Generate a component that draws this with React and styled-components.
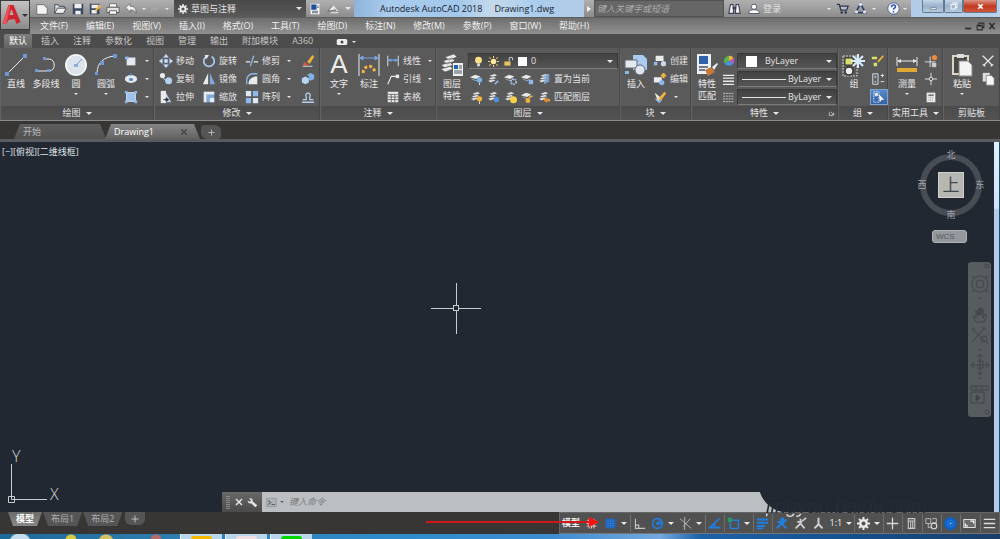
import React from "react";
import styled, { createGlobalStyle, css } from "styled-components";

const GlobalStyle = createGlobalStyle`
  *, *::before, *::after { box-sizing: border-box; }
  html, body { margin: 0; padding: 0; }
  body {
    background: #222831;
    color: #e4e4e4;
    font: 9px/12px "Open Sans", "Noto Sans CJK SC", sans-serif;
    overflow-x: hidden;
  }
  button, input, select {
    font: inherit;
    color: inherit;
    background: none;
    border: 0;
    border-radius: 0;
    padding: 0;
    margin: 0;
    outline: none;
  }
  button { white-space: nowrap; }
  a { color: inherit; text-decoration: none; }
`;

/* ---------- drawings ---------- */

const W = "#e8eaec";
const B = "#8db8ea";
const Y = "#f0b53a";
const C = "#1f7fe0";

const Sheets = ({ children }) => (
  <>
    <path d="M4 4l6-2 3 2-6 2zM3 7l6-2 3 2-6 2zM2 10l6-2 3 2-6 2z" fill={W} stroke="#555" strokeWidth=".5" />
    {children}
  </>
);

const Sheet = ({ children }) => (
  <>
    <path d="M1 6l6-3 6 2-5 3z" fill={W} />
    <path d="M3 8l5 2 4-2" stroke="#9aa" fill="none" />
    {children}
  </>
);

const art = {
  /* title bar */
  new: <path d="M2 3h8l4 4v7H2z" fill="#f4f4f4" stroke="#666" />,
  open: <><path d="M2 13V3h4l1 2h6v2" fill="#d8dde2" stroke="#3d4450" /><path d="M2 13l3-6h10l-3 6z" fill="#eee" stroke="#3d4450" /></>,
  save: <><path d="M2 2h12v12H2z" fill="#3c4a60" /><path d="M4 2h8v5H4zM5 10h6v4H5z" fill="#eee" /></>,
  saveas: <><path d="M2 2h11v12H2z" fill="#3c4a60" /><path d="M4 3h8v4H4zM4 9h6v4H4z" fill="#eee" /><path d="M8 9l5-6 2 2-6 6z" fill={Y} /></>,
  print: <><path d="M4 2h8v4H4z" fill="#fff" stroke="#666" /><path d="M1 6h14v6H1z" fill="#e2e2e2" stroke="#555" /><path d="M4 10h8v4H4z" fill="#fff" stroke="#555" /></>,
  undo: <path d="M2 6l5-4v3c5 0 7 2 7 8-2-4-3-4-7-4v3z" fill="#f2f2f2" stroke="#555" strokeWidth=".7" />,
  redo: <path d="M14 6L9 2v3c-5 0-7 2-7 8 2-4 3-4 7-4v3z" fill="#a5a5a5" />,
  gear: <><circle cx="8" cy="8" r="4" fill="none" stroke={W} strokeWidth="3" /><path d="M8 0v3M8 13v3M0 8h3M13 8h3M2.500 2.500l2 2M11.500 11.500l2 2M2.500 13.500l2-2M11.500 4.500l2-2" stroke={W} strokeWidth="2.400" /></>,
  docset: <><path d="M2 1h12v14H2z" fill="#f4f4f4" /><path d="M3 2h7v7H3z" fill="#1b4f9c" /><path d="M4 11h8M4 13h8M11 4h2M11 6h2" stroke="#345" /></>,
  sheetpen: <><path d="M1 11l7-8 4 6z" fill="#eee" stroke="#555" /><path d="M8 3l6 8M5 13h10" stroke="#eee" strokeWidth="1.500" /></>,
  binoculars: <><path d="M3 3h3l1 11H1zM10 3h3l2 11H9z" fill="#f2f2f2" stroke="#3a3d55" strokeWidth="1.300" /><path d="M6 6h4v3H6z" fill="#3a3d55" /></>,
  user: <><circle cx="8" cy="5" r="3.500" fill="#fff" stroke="#3a3d55" /><path d="M1 14c0-4 3-5 7-5s7 1 7 5z" fill="#fff" stroke="#3a3d55" /></>,
  cart: <><path d="M1 3h3l2 7h7l2-5H5" fill="#bbc0c8" stroke="#2f3550" strokeWidth="1.600" /><circle cx="7" cy="13" r="1.500" fill="#2f3550" /><circle cx="12" cy="13" r="1.500" fill="#2f3550" /></>,
  a360: <><path d="M8 2l6 11H2z" fill="none" stroke="#2f3f6a" strokeWidth="2" /><circle cx="8" cy="3" r="2" fill="#dfe6f2" /><circle cx="3" cy="12" r="2" fill="#dfe6f2" /><circle cx="13" cy="12" r="2" fill="#dfe6f2" /></>,
  help: <><circle cx="8" cy="8" r="7" fill="#f6f8fc" stroke="#33508f" /><path d="M5.500 6.500c0-4 5-3.500 5-1 0 2-2.500 2-2.500 4M8 11v2" fill="none" stroke="#2a4fae" strokeWidth="1.800" /></>,
  video: <><rect x="1" y="4" width="14" height="8" rx="2" fill="#eee" /><circle cx="8" cy="8" r="2" fill="#444" /></>,
  min: <path d="M3 10h10v3H3z" fill="#fff" stroke="#555" />,
  restore: <path d="M5 2h9v9h-3M2 5h9v9H2z" fill="none" stroke="#f8f8f8" strokeWidth="2" />,
  close: <path d="M4 4l8 8M12 4l-8 8" stroke="#fff" strokeWidth="3" />,
  dmin: <path d="M2 10h11v3H2z" fill="#2b2b2b" />,
  drestore: <path d="M5 5V2h9v8h-3M2 6h9v8H2zM2 7h9" fill="none" stroke="#2b2b2b" strokeWidth="1.800" />,
  dclose: <path d="M3 2l10 12M13 2L3 14" stroke="#2b2b2b" strokeWidth="3" />,

  /* large ribbon buttons, 24 x 24 */
  line: <><path d="M3 21L21 3" stroke={W} /><path d="M1 19h4v4H1zM19 1h4v4h-4z" fill="#6d97d6" /></>,
  pline: <><path d="M3 18h12c7 0 7-12 0-12H11" stroke={W} fill="none" /><path d="M1 16h3v3H1zM13 16h3v3h-3zM9 4h3v3H9z" fill="#6d97d6" /></>,
  circle: <><circle cx="12" cy="12" r="11" fill="#dfe5ec" /><circle cx="12" cy="12" r="10" fill="#dde3ea" stroke="#fff" /><path d="M12 12l6-6" stroke="#6d97d6" /><path d="M10 11h4v3h-4z" fill="#86aee2" /></>,
  arc: <><path d="M3 21C3 9 10 4 21 3" stroke={W} fill="none" /><path d="M1 19h3v3H1zM6 8h4v4H6zM19 1h4v4h-4z" fill="#6d97d6" /></>,
  dim: <><path d="M2 1v22M22 1v22" stroke={W} /><path d="M3 5h18M3 5l3-2v4zM21 5l-3-2v4z" stroke="#76a4e6" fill="#76a4e6" /><path d="M6 20c1-9 11-9 12 0" stroke={Y} strokeWidth="3" strokeDasharray="3 2" fill="none" /></>,
  layerprops: <><path d="M5 4l9-3 3 3-8 3zM3 8l9-3 3 3-8 3zM1 12l9-3 3 3-8 3zM1 16l9-3 3 3-8 3z" fill={W} stroke="#555" strokeWidth=".6" /><path d="M13 10h10v13H13z" fill="#f2f2f2" /><path d="M14 12h4v4h-4z" fill="#2561b5" /><path d="M19 13h3M19 15h3M14 18h8M14 20h8" stroke="#456" /></>,
  insert: <><path d="M9 2h10l4 4v11H9z" fill="#a9cbf0" /><path d="M1 7h12v8H1z" fill="#e5e9ee" stroke="#667" /><circle cx="16" cy="17" r="5" fill="#dfe5ec" stroke="#667" /><path d="M1 18h4v3H1z" fill={B} /></>,
  match: <><path d="M2 1h14v20H2z" fill="#eceff2" /><path d="M4 3h9v8H4z" fill="#2f62aa" /><path d="M4 14h9M4 17h6" stroke="#456" strokeWidth="1.500" /><path d="M10 17l6-3 4 5-7 4z" fill="#c7793a" /><path d="M17 14l5-4 1 1-4 6z" fill={W} /></>,
  group: <><path d="M1 3h14v20H1z" fill="none" stroke="#ccc" strokeDasharray="2 1" /><path d="M3 5h8v7H3z" fill="#d9e06a" stroke="#333" /><circle cx="7" cy="18" r="4" fill="#eee" stroke="#333" strokeWidth="1.500" /><path d="M16 1v14M9 8h14M11 3l10 10M21 3L11 13" stroke="#d8ecff" strokeWidth="2" /></>,
  measure: <><path d="M2 4v9M22 4v9M3 8h18" stroke={W} /><path d="M2 8l4-2v4zM22 8l-4-2v4z" fill={W} /><path d="M2 15h20v4H2z" fill="#e0a936" /></>,
  paste: <><path d="M3 3h15v18H3z" fill="#4c4a46" stroke="#ddd6c4" strokeWidth="2" /><path d="M7 1h7v4H7z" fill="#ddd" /><path d="M9 8h9l4 4v11H9z" fill="#f4f4f4" stroke="#888" /></>,

  /* small ribbon buttons, 16 x 16 */
  rect: <><path d="M3 4h10v9H3z" fill="#e3e9f0" /><path d="M1 3h4v3H1z" fill={B} /></>,
  ellipse: <><ellipse cx="8" cy="8" rx="7" ry="4.500" fill="#e3e9f0" /><path d="M6 7h4v3H6zM7 1h2v3H7z" fill="#4d7fbd" /></>,
  hatch: <><path d="M3 3h10v10H3z" fill="#9cc1ec" stroke="#dce8f6" /><path d="M1 1h3v3H1zM12 1h3v3h-3zM1 12h3v3H1zM12 12h3v3h-3z" fill={B} /></>,
  move: <path d="M8 0l3 4H5zM8 16l3-4H5zM0 8l4-3v6zM16 8l-4-3v6zM6 6h4v4H6z" fill="#d4e2f3" stroke="#86abd9" strokeWidth=".6" />,
  rotate: <><path d="M11 3a6 6 0 1 1-6 0" fill="none" stroke="#a9c8ee" strokeWidth="2" /><path d="M3 1l5 0-3 5z" fill={W} /></>,
  trim: <><path d="M1 9h5M10 9h5" stroke={W} strokeWidth="1.500" /><path d="M10 2L6 14" stroke={B} strokeWidth="1.500" /></>,
  erase: <><path d="M7 9l6-8 2 2-5 8z" fill={Y} /><path d="M4 9l4 3-3 2-3-2z" fill="#d65a3a" /><path d="M2 14h11" stroke={W} /></>,
  copy: <><circle cx="4" cy="4" r="3" fill={W} /><circle cx="11" cy="10" r="4" fill="#b3d0f2" /><path d="M5 7l3 3" stroke={W} /></>,
  mirror: <><path d="M7 1v13H1z" fill={W} /><path d="M9 1v13h6z" fill="#7da9df" /></>,
  fillet: <><path d="M2 14V8c1-4 4-6 8-6h4" stroke={B} strokeWidth="1.500" fill="none" /><path d="M4 14c0-6 4-9 10-9v9z" fill={W} /></>,
  explode: <><path d="M1 7l4-2 4 2v5l-4 2-4-2z" fill="#b8d3f2" /><path d="M7 3l4-2 4 2v5l-4 2-2-1V5z" fill="#7fb0e8" /></>,
  stretch: <><path d="M2 1h6v14H2z" fill={W} /><path d="M8 3l6 11H8z" fill="#b3d0f2" /><path d="M5 11h5M8 9l3 2-3 2z" stroke="#333" fill="#333" /></>,
  scale: <><path d="M2 2h12v12H2z" fill="#7fa8dc" /><path d="M2 2h12v3H5v9H2z" fill={W} /><path d="M9 9h5v5H9z" fill="#e3edf8" /></>,
  array: <><path d="M1 1h6v6H1zM9 9h6v6H9z" fill="#dfe9f5" /><path d="M9 1h6v6H9zM1 9h6v6H1z" fill="#8db8ea" /></>,
  offset: <path d="M1 14h14M2 11h4V8c-3-6 7-6 4 0v3h4" stroke="#b8cfe9" fill="none" strokeWidth="1.500" />,
  linear: <><path d="M2 2v12M14 2v12" stroke={W} /><path d="M2 7h12" stroke="#76a4e6" strokeWidth="1.500" /><path d="M2 7l4-2v4zM14 7l-4-2v4z" fill="#76a4e6" /></>,
  leader: <><path d="M2 14L6 5h5" stroke={W} fill="none" strokeWidth="1.300" /><path d="M11 3h4v4h-4z" fill={W} /></>,
  table: <><path d="M2 2h12v12H2z" fill={W} /><path d="M2 5h12M2 8h12M2 11h12M6 5v9M10 5v9" stroke="#666" /></>,
  bulb: <><circle cx="8" cy="6" r="5" fill="#fbe08a" /><path d="M6 11h4v4H6z" fill="#ddd" /></>,
  sun: <><circle cx="8" cy="8" r="4" fill="#fbe9a0" /><path d="M8 0v3M8 13v3M0 8h3M13 8h3M2 2l2 2M12 12l2 2M2 14l2-2M12 4l2-2" stroke="#f3cf6a" strokeWidth="1.500" /></>,
  lock: <><path d="M2 8h9v6H2z" fill="#e8c25a" /><path d="M9 8V4c0-3 5-3 5 0v2" stroke="#ccc" fill="none" strokeWidth="1.500" /></>,
  l1: <Sheet><circle cx="12" cy="9" r="3" fill="#6fb6f5" /><path d="M12 12v3" stroke={W} /></Sheet>,
  l2: <Sheets><path d="M10 14l4-4" stroke={B} strokeWidth="2" /></Sheets>,
  l3: <Sheet><circle cx="12" cy="11" r="3" fill="none" stroke="#a9cbf0" strokeWidth="2" strokeDasharray="2 1" /></Sheet>,
  l4: <Sheet><path d="M10 9h5v5h-5z" fill={B} /></Sheet>,
  l5: <Sheets><path d="M8 3l6-1v9l-6 3z" fill="#8db8ea" opacity=".7" /></Sheets>,
  l6: <Sheets><circle cx="12" cy="10" r="3" fill={Y} /><path d="M12 13v3" stroke={W} /></Sheets>,
  l7: <Sheets><circle cx="12" cy="11" r="3" fill="#4f8fdb" /></Sheets>,
  l8: <Sheets><circle cx="12" cy="11" r="4" fill="#f5d24a" /></Sheets>,
  l9: <Sheet><path d="M7 10h4v4H7zM11 9V7h4" stroke={Y} fill={Y} /></Sheet>,
  l10: <Sheets><path d="M7 11l4-3v2h4v3h-4v2z" fill="#e0903a" /></Sheets>,
  create: <><path d="M3 2h9v6H3z" fill={W} /><circle cx="12" cy="11" r="3" fill="#c9d8ea" /><path d="M1 9h4v4H1z" fill={B} /></>,
  editblock: <><path d="M1 6h9v6H1z" fill={W} /><circle cx="10" cy="12" r="3" fill={B} /><path d="M12 1v6M9 4h6" stroke={Y} strokeWidth="2.500" /></>,
  attr: <><path d="M2 3l6 5-2 6z" fill={W} /><path d="M6 10l7-8 2 2-7 9z" fill={Y} /><path d="M3 10l4 4 3-3" stroke={B} fill="none" strokeWidth="1.500" /></>,
  wheel: <><path d="M8 8V1a7 7 0 0 1 6 10z" fill="#e0583c" /><path d="M8 8l6 3a7 7 0 0 1-12 0z" fill="#4a8fe0" /><path d="M8 8l-6 3A7 7 0 0 1 8 1z" fill="#57b34a" /><path d="M8 8l6 3a7 7 0 0 0 0-7z" fill="#b057c4" /><path d="M8 1a7 7 0 0 1 6 3l-6 4z" fill={Y} /></>,
  weights: <path d="M0 2h16M0 6h16M0 10.500h16M0 15h16" stroke={W} strokeWidth="2" />,
  types: <path d="M0 2h16M0 6h16M0 10h16M0 14h16" stroke={W} strokeDasharray="3 1" />,
  ungroup: <><path d="M1 3h6v3H1zM3 10h4v4H3z" fill="#d9e06a" /><path d="M8 9l6-7" stroke={Y} strokeWidth="2" /></>,
  groupedit: <><path d="M2 2h6v12H2z" fill="none" stroke={W} /><path d="M4 4h2v3H4zM4 10h2v2H4z" fill={B} /><path d="M11 4h4M13 2v4M11 11h4" stroke={W} /></>,
  groupsel: <><path d="M2 2h6v12H2z" fill="none" stroke="#cfe3ff" strokeDasharray="2 1" /><circle cx="5" cy="5" r="2" fill={W} /><path d="M8 5l6 6-3 0-2 3z" fill="#fff" /></>,
  point: <><path d="M8 1v14M1 8h14" stroke={W} /><circle cx="8" cy="8" r="2" fill="#555" stroke={W} /></>,
  pointid: <><path d="M7 3v12M1 9h12" stroke={W} /><circle cx="12" cy="4" r="3" fill="#f0873a" /><path d="M9 10h5v5H9z" fill="#ccc" /></>,
  calc: <><path d="M3 3h10v11H3z" fill={W} /><path d="M5 5h6v2H5z" fill="#777" /><path d="M5 9h6M5 11.500h6" stroke="#888" strokeDasharray="1 1" /></>,
  cut: <path d="M2 2l11 11M14 2L3 13M2 12l3 2M14 12l-3 2" stroke={W} strokeWidth="1.500" />,
  copyclip: <><path d="M2 1h8v10H2z" fill="#ddd" /><path d="M6 4h6l3 3v8H6z" fill="#f6f6f6" stroke="#777" strokeWidth=".8" /></>,
  launch: <path d="M3 5v8h8M6 4l7 7M13 6v5H8" stroke={W} fill="none" strokeWidth="1.500" />,

  /* command line and status bar */
  wrench: <path d="M3 2l3 3-2 2-3-2c0 4 3 5 5 4l6 6 3-3-7-6c1-3-1-5-5-4z" fill="#e4e4e4" />,
  prompt: <><path d="M1 2h14v12H1z" fill="#aeb2b4" stroke="#8b8f92" /><path d="M3 5l4 3-4 3M8 11h5" stroke="#5a5e62" fill="none" strokeWidth="1.500" /></>,
  snap: <path d="M5 2v12M8 2v12M11 2v12M2 5h12M2 8h12M2 11h12" stroke="#e8c8c4" strokeWidth="1.300" />,
  grid: <><path d="M2 2h12v12H2z" fill="#1b62b8" /><path d="M5 2v12M8 2v12M11 2v12M2 5h12M2 8h12M2 11h12" stroke="#3a86dc" strokeWidth=".6" /></>,
  ortho: <path d="M3 2v12h12M3 10h4v4" stroke="#c4c4c4" fill="none" strokeWidth="1.400" />,
  polar: <><circle cx="8" cy="8" r="6" fill="none" stroke={C} strokeWidth="2" /><path d="M8 8h7M8 8l5-5" stroke={C} strokeWidth="1.800" /><circle cx="8" cy="8" r="2" fill={C} /></>,
  iso: <path d="M1 2l14 12M7 0v16M14 2L5 12" stroke="#b4b4b4" strokeWidth="1.200" fill="none" />,
  track: <path d="M14 2L2 13h13M8 8v4" stroke={C} fill="none" strokeWidth="2" />,
  osnap: <><path d="M4 4h10v10H4z" fill="none" stroke={C} strokeWidth="1.800" /><path d="M1 1h5v5H1z" fill="#20a050" /></>,
  lwt: <path d="M1 3h14M1 7h14M1 11h10M1 14h8" stroke={C} strokeWidth="2.400" />,
  annoBlue: <><circle cx="9" cy="3" r="2.500" fill={C} /><path d="M8 4l1 5 5 5M8 8l-6 6M3 6l7 1 4-4" stroke={C} strokeWidth="2.500" fill="none" /></>,
  annoGrey: <><path d="M8 2v6l5 6M8 8l-6 6M4 6h6" stroke="#cfcfcf" strokeWidth="2.200" fill="none" /><path d="M10 5l5-4" stroke="#cfcfcf" strokeWidth="2" /></>,
  anno: <path d="M8 1v8l5 5M8 9l-5 5" stroke="#cfcfcf" strokeWidth="2.400" fill="none" />,
  plus: <path d="M8 1v14M1 8h14" stroke="#d8d8d8" strokeWidth="1.600" />,
  units: <path d="M4 2h8v12H4zM4 5h8M7 5v9M9.500 5v9" fill="none" stroke="#c8c8c8" strokeWidth="1.300" />,
  quick: <><path d="M1 2h6v6H1zM9 2h5v5H9" fill="none" stroke="#c8c8c8" /><circle cx="11" cy="11" r="3.500" fill="none" stroke="#d8d8d8" strokeWidth="1.400" /><path d="M4 8v5h3" stroke="#c8c8c8" fill="none" /></>,
  hardware: <><circle cx="8" cy="8" r="8" fill="#0d62c4" /><circle cx="8" cy="8" r="4" fill="none" stroke="#2f82de" /><path d="M7 6l3 2-3 2z" fill="#66aaf4" /></>,
  full: <><path d="M1 3h14v10H1z" fill="#6c6c6c" stroke="#ddd" strokeWidth="1.300" /><path d="M9 5h4v3M3 8v3h3" fill="none" stroke="#fff" strokeWidth="1.500" /></>,
  burger: <path d="M1 3h14M1 8h14M1 13h14" stroke="#dcdcdc" strokeWidth="1.600" />,
};

const Svg = styled.svg`
  display: block;
  flex: none;
  width: ${(p) => p.$size}px;
  height: ${(p) => p.$size}px;
`;

function Icon({ name, size = 12, box = 16 }) {
  return (
    <Svg $size={size} viewBox={`0 0 ${box} ${box}`} aria-hidden="true">
      {art[name]}
    </Svg>
  );
}

const Caret = styled.i`
  flex: none;
  width: 0;
  height: 0;
  border: ${(p) => (p.$small ? 2 : 3)}px solid transparent;
  border-top-color: ${(p) => p.$color || "#e8e8e8"};
  border-bottom: 0;
  pointer-events: none;
`;

/* ---------- page ---------- */

const Page = styled.div`
  min-height: 100vh;
  display: flex;
  flex-direction: column;
`;

const Header = styled.header`
  display: grid;
  grid-template-columns: 30px 1fr;
  background: #4c4c4c;
`;

const AppButton = styled.button`
  height: 30px;
  display: flex;
  align-items: center;
  justify-content: center;
  gap: 1px;
  border: 1px solid #3c3c3c;
  background: linear-gradient(#c2c2c2, #8a8a8a);
`;

const HeaderRows = styled.div`
  min-width: 0;
`;

const TitleBar = styled.div`
  height: 18px;
  display: flex;
  background: linear-gradient(#b0b0b0, #8c8c8c);
  border-bottom: 1px solid #5e5e5e;
`;

const ToolStrip = styled.div`
  flex: none;
  width: ${(p) => p.$width}px;
  padding: 0 ${(p) => p.$pad || 4}px;
  display: flex;
  align-items: center;
  justify-content: ${(p) => p.$justify || "space-between"};
  gap: ${(p) => p.$gap || 0}px;
`;

const IconButton = styled.button`
  display: flex;
  align-items: center;
  justify-content: center;
  gap: 3px;
`;

const Workspace = styled.label`
  flex: none;
  width: 132px;
  display: flex;
  align-items: center;
  gap: 3px;
  padding: 0 4px;
  background: linear-gradient(#484848, #5a5a5a);
`;

const Select = styled.select`
  appearance: none;
  flex: 1;
  min-width: 0;
  height: 14px;
  line-height: 14px;
  option { color: #222; }
`;

const WindowTitle = styled.h1`
  flex: 1;
  min-width: 0;
  margin: 0;
  display: flex;
  gap: 12px;
  align-items: center;
  padding-left: 26px;
  font-size: 9px;
  font-weight: 400;
  color: #16202c;
  white-space: nowrap;
  background: linear-gradient(90deg, #8fb4dc, #a9cbec 15%, #a2c8ec 45%, #c4d9ea 60%, #a9cdee 80%, #b4cce4);
`;

const Search = styled.input`
  flex: none;
  width: 130px;
  padding: 0 2px;
  background: #666;
  border: 1px solid #545454;
  font-style: italic;
  &::placeholder { color: #acacac; opacity: 1; }
`;

const WindowButtons = styled.div`
  flex: none;
  width: 89px;
  display: flex;
  justify-content: flex-end;
  align-items: flex-start;
  padding-right: 3px;
  background: linear-gradient(90deg, #b2cbe6, #b9d3ec);
`;

const WindowButton = styled.button`
  width: ${(p) => p.$width}px;
  height: 13px;
  display: flex;
  align-items: center;
  justify-content: center;
  border: 1px solid #66788c;
  border-top: 0;
  border-radius: 0 0 2px 2px;
  background: ${(p) => (p.$danger ? "linear-gradient(#dc9686, #c03a20 50%, #d0573a)" : "linear-gradient(#c4d6e8, #9ab2cc 50%, #b4cae0)")};
`;

const MenuBar = styled.nav`
  height: 16px;
  display: flex;
  align-items: center;
  gap: 18px;
  padding: 0 4px 0 10px;
  background: linear-gradient(#6e6e6e, #909090);
  white-space: nowrap;
  a { color: #f0f0f0; }
`;

const DocButtons = styled.div`
  margin-left: auto;
  display: flex;
  gap: 3px;
`;

const RibbonTabs = styled.nav`
  display: flex;
  align-items: flex-end;
  gap: 4px;
  height: 14px;
  padding-left: 4px;
  background: #4c4c4c;
`;

const RibbonTab = styled.a`
  height: 14px;
  line-height: 14px;
  padding: 0 5px;
  border-radius: 2px 2px 0 0;
  color: ${(p) => (p.$active ? "#fff" : "#c6c6c6")};
  background: ${(p) => (p.$active ? "linear-gradient(#7e7e7e, #646464)" : "none")};
`;

const Ribbon = styled.div`
  display: grid;
  grid-template-columns: 154fr 166fr 116fr 184fr 71fr 147fr 50fr 55fr 57fr;
  height: 73px;
  background: #5a5a5a;
  border-bottom: 1px solid #8a8a8a;
`;

const PanelBox = styled.section`
  min-width: 0;
  display: flex;
  flex-direction: column;
  border-right: 1px solid #474747;
  border-left: 1px solid #646464;
`;

const PanelBody = styled.div`
  flex: 1;
  display: flex;
  align-items: flex-start;
  gap: 2px;
  padding: 4px 1px 0 ${(p) => (p.$inset ? 4 : 1)}px;
`;

const PanelTitle = styled.h2`
  position: relative;
  margin: 0;
  height: 14px;
  display: flex;
  align-items: center;
  justify-content: center;
  gap: 5px;
  font-size: 9px;
  font-weight: 400;
  white-space: nowrap;
  background: linear-gradient(#4b4b4b, #525252);
`;

const Launcher = styled.button`
  position: absolute;
  right: 2px;
  top: 4px;
`;

const Large = styled.button`
  flex: none;
  width: 28px;
  display: flex;
  flex-direction: column;
  align-items: center;
  color: #ececec;
  span { width: 18px; white-space: normal; line-height: 12px; }
  ${(p) => p.$wide && css`span { width: 28px; }`}
  ${(p) => p.$single && css`span { width: 10px; }`}
  svg { margin: 1px 0; }
`;

const CaretRow = styled.div`
  height: 8px;
  display: flex;
  align-items: center;
`;

const LetterA = styled.b`
  height: 26px;
  font: 400 26px/24px "Liberation Sans", sans-serif;
`;

const SmallGrid = styled.div`
  flex: none;
  display: grid;
  grid-template-rows: repeat(3, 18px);
  grid-template-columns: ${(p) => p.$columns};
  align-items: center;
  margin-left: ${(p) => p.$indent || 0}px;
`;

const Small = styled.button`
  display: flex;
  align-items: center;
  gap: 3px;
  height: 16px;
  padding: 0 1px;
  i { margin-left: 4px; }
  ${(p) => p.$active && css`
    background: linear-gradient(#5a8acb, #34619f);
    border: 1px solid #7ea4d6;
  `}
`;

const Column = styled.div`
  flex: 1;
  min-width: 0;
  display: grid;
  grid-template-rows: repeat(3, 18px);
  align-items: center;
`;

const Combo = styled.label`
  height: 16px;
  display: flex;
  align-items: center;
  gap: 4px;
  padding: 0 4px;
  background: linear-gradient(#424242, #555);
  border: 1px solid #393939;
  border-bottom-color: #7c7c7c;
`;

const Swatch = styled.i`
  flex: none;
  width: ${(p) => p.$size}px;
  height: ${(p) => p.$size}px;
  margin: 0 ${(p) => p.$gap || 0}px;
  background: #fff;
`;

const Stroke = styled.i`
  flex: none;
  width: 44px;
  height: 1px;
  margin-right: -2px;
  background: #e4e4e4;
`;

const ToolRow = styled.div`
  display: flex;
  align-items: center;
  gap: 1px;
`;

const FileTabs = styled.nav`
  height: 21px;
  display: flex;
  align-items: flex-end;
  padding-left: 14px;
  background: #373635;
  border-bottom: 3px solid #5b5c61;
`;

const FileTab = styled.div`
  width: ${(p) => p.$width}px;
  height: 15px;
  display: flex;
  align-items: center;
  justify-content: space-between;
  padding: 0 13px 0 9px;
  margin-right: -1px;
  clip-path: polygon(6px 0, calc(100% - 6px) 0, 100% 100%, 0 100%);
  color: ${(p) => (p.$active ? "#fff" : "#b8b8b8")};
  background: ${(p) => (p.$active ? "linear-gradient(#868686, #626262)" : "linear-gradient(#5e5e5e, #515151)")};
`;

const AddTab = styled.button`
  width: 20px;
  height: ${(p) => (p.$bottom ? 13 : 14)}px;
  display: flex;
  align-items: center;
  justify-content: center;
  margin-left: 2px;
  border-radius: ${(p) => (p.$bottom ? "0 0 6px 6px" : "3px 6px 3px 6px")};
  background: #555;
`;

const Workarea = styled.main`
  flex: 1 0 340px;
  display: flex;
`;

const Canvas = styled.div`
  position: relative;
  flex: 1;
  background: #222831;
`;

const WindowEdge = styled.div`
  width: 6px;
  background: linear-gradient(#e2efff, #d0e2fa 66px, #b2cbea 68px, #b2cbea);
  border-right: 1px solid #16505c;
`;

const ViewLabel = styled.p`
  position: absolute;
  left: 2px;
  top: 4px;
  margin: 0;
  color: #dfe2e6;
`;

const Crosshair = styled.svg`
  position: absolute;
  left: 430px;
  top: 140px;
  width: 52px;
  height: 52px;
`;

const Ucs = styled.svg`
  position: absolute;
  left: 6px;
  bottom: 6px;
  width: 60px;
  height: 64px;
  font: 300 16px "Open Sans", sans-serif;
  fill: #d4d6d9;
`;

const ViewCube = styled.div`
  position: absolute;
  right: 9px;
  top: 7px;
  width: 68px;
  height: 72px;
  display: grid;
  grid-template-columns: 10px 1fr 10px;
  grid-template-rows: 12px 1fr 12px;
  place-items: center;
  color: #a0a4a9;
  &::before {
    content: "";
    position: absolute;
    left: 3px;
    top: 5px;
    width: 62px;
    height: 62px;
    border: 6px solid #484c54;
    border-radius: 50%;
  }
  span { position: relative; }
`;

const CubeFace = styled.button`
  grid-area: 2 / 2;
  position: relative;
  width: 26px;
  height: 26px;
  border: 1px solid #d0d0ca;
  background: #b6b7b3;
  color: #45484b;
  font-size: 17px;
  line-height: 22px;
`;

const Wcs = styled.button`
  position: absolute;
  right: 27px;
  top: 88px;
  width: 35px;
  height: 13px;
  padding-left: 3px;
  border: 1px solid #b0b2b6;
  border-radius: 3px;
  background: #94979c;
  color: #55595e;
  font: 8px/10px "Liberation Sans", sans-serif;
  text-align: left;
`;

const NavBar = styled.div`
  position: absolute;
  right: 3px;
  top: 120px;
  width: 23px;
  height: 155px;
  border-radius: 3px;
  background: #575c5f;
  svg { display: block; }
`;

const CommandLine = styled.form`
  position: absolute;
  left: 222px;
  right: 211px;
  bottom: 0;
  height: 20px;
  display: flex;
`;

const CommandHandle = styled.div`
  width: 40px;
  display: flex;
  align-items: center;
  justify-content: space-between;
  padding: 0 4px;
  background: linear-gradient(#686868, #4a4a4a);
  &::before {
    content: "";
    width: 4px;
    height: 13px;
    background: repeating-linear-gradient(#8a8a8a 0 1px, transparent 1px 2px);
  }
`;

const CommandField = styled.label`
  flex: 1;
  display: flex;
  align-items: center;
  gap: 3px;
  padding-left: 4px;
  background: radial-gradient(circle at calc(100% + 5px) -9px, transparent 29px, #bbbfc1 30px);
  input {
    flex: 1;
    margin-left: 2px;
    color: #444;
    font-style: italic;
  }
  input::placeholder { color: #777b7e; opacity: 1; }
`;

const BottomBar = styled.footer`
  position: relative;
  height: 22px;
  display: flex;
  justify-content: space-between;
  background: #373635;
`;

const LayoutTabs = styled.nav`
  display: flex;
  align-items: flex-start;
  padding-left: 8px;
`;

const LayoutTab = styled.a`
  height: 14px;
  line-height: 13px;
  padding: 0 8px;
  margin-right: 1px;
  clip-path: polygon(0 0, 100% 0, calc(100% - 5px) 100%, 5px 100%);
  color: ${(p) => (p.$active ? "#fff" : "#aeaeae")};
  font-weight: ${(p) => (p.$active ? 700 : 400)};
  background: ${(p) => (p.$active ? "linear-gradient(#6c6c6c, #888)" : "#555")};
`;

const StatusBar = styled.div`
  width: 441px;
  display: flex;
  align-items: center;
  justify-content: space-between;
  padding: 0 1px 0 0;
  border: 1px solid #666;
  border-bottom-color: #777;
  background: #515151;
`;

const StatusButton = styled.button`
  height: 18px;
  padding: 0 ${(p) => (p.$tight ? 1 : 2)}px;
  display: flex;
  align-items: center;
  color: #f0f0f0;
  font-weight: ${(p) => (p.$bold ? 700 : 400)};
  border-left: ${(p) => (p.$rule ? 1 : 0)}px solid #6e6e6e;
`;

const Pointer = styled.svg`
  position: absolute;
  right: 401px;
  top: 4px;
  width: 173px;
  height: 12px;
`;

const Watermark = styled.div`
  position: absolute;
  right: 66px;
  bottom: 16px;
  width: 168px;
  color: transparent;
  background: linear-gradient(#262c35 19px, #dcdcdc 20px);
  background-clip: text;
  font: italic 20px/24px "Liberation Sans", sans-serif;
  pointer-events: none;
`;

const Taskbar = styled.div`
  height: 5px;
  display: flex;
  gap: 3px;
  padding-left: 180px;
  overflow: hidden;
  background:
    radial-gradient(circle at 20px 10px, #c4dcee 10px, transparent 12px),
    radial-gradient(circle at 71px 6px, #d8c840 5px, transparent 6px),
    radial-gradient(circle at 106px 8px, #d8c060 7px, transparent 8px),
    radial-gradient(circle at 156px 6px, #b86a6a 5px, transparent 6px),
    linear-gradient(90deg, #1b6a98, #2d7cae 16%, #2f8ccc 40%, #3c8cd0 55%, #74a8de 66%, #1c62a8 70%, #14508e 85%, #1a3d66);
`;

const Task = styled.div`
  width: 42px;
  padding: 2px 10px 0;
  background: #b9d6ea;
  border-left: 1px solid #e6f4fc;
  &::before {
    content: "";
    display: block;
    height: 4px;
    border-radius: 3px 3px 0 0;
    background: ${(p) => p.$color};
  }
`;

function Panel({ title, menu = true, launcher, inset, children }) {
  return (
    <PanelBox>
      <PanelBody $inset={inset}>{children}</PanelBody>
      <PanelTitle>
        {title}
        {menu && <Caret />}
        {launcher && <Launcher aria-label={title}><Icon name="launch" size={7} /></Launcher>}
      </PanelTitle>
    </PanelBox>
  );
}

function LargeButton({ icon, label, caret, ...rest }) {
  return (
    <Large {...rest}>
      {icon ? <Icon name={icon} size={24} box={24} /> : <LetterA aria-hidden="true">A</LetterA>}
      <span>{label}</span>
      {caret && <CaretRow><Caret $small /></CaretRow>}
    </Large>
  );
}

function SmallButton({ icon, label, caret, active, name }) {
  return (
    <Small $active={active} aria-label={name}>
      <Icon name={icon} size={14} />
      {label}
      {caret && <Caret $small />}
    </Small>
  );
}

const menus = ["文件(F)", "编辑(E)", "视图(V)", "插入(I)", "格式(O)", "工具(T)", "绘图(D)", "标注(N)", "修改(M)", "参数(P)", "窗口(W)", "帮助(H)"];
const tabs = ["默认", "插入", "注释", "参数化", "视图", "管理", "输出", "附加模块", "A360"];

const status = [
  { icon: "snap" }, { icon: "grid" }, { caret: true },
  { icon: "ortho", rule: true }, { icon: "polar" }, { caret: true },
  { icon: "iso" }, { caret: true },
  { icon: "track", rule: true }, { icon: "osnap", rule: true }, { caret: true },
  { icon: "lwt", rule: true }, { icon: "annoBlue", rule: true }, { icon: "annoGrey" }, { icon: "anno" },
  { text: "1:1" }, { caret: true },
  { icon: "gear", rule: true }, { caret: true },
  { icon: "plus", rule: true }, { icon: "units", rule: true }, { icon: "quick", rule: true },
  { icon: "hardware", rule: true }, { icon: "full", rule: true }, { icon: "burger", rule: true },
];

export default function App() {
  return (
    <Page>
      <GlobalStyle />
      <Header>
        <AppButton aria-label="应用程序菜单">
          <svg width="19" height="22" viewBox="0 0 18 22" aria-hidden="true">
            <path d="M0 20L6 1h5l7 17-4 2-2-5-6 1-2 4z" fill="#d0242e" />
            <path d="M7 11l2-6 2 6z" fill="#b8b0b0" />
            <path d="M0 20L6 1l2 1-4 18z" fill="#e8505a" />
          </svg>
          <Caret $color="#333" />
        </AppButton>
        <HeaderRows>
          <TitleBar>
            <ToolStrip $width={144} $pad={5}>
              {["new", "open", "save", "saveas", "print", "undo"].map((n) => (
                <IconButton key={n} aria-label={n}><Icon name={n} size={14} /></IconButton>
              ))}
              <Caret $small />
              <IconButton aria-label="redo"><Icon name="redo" size={12} /></IconButton>
              <Caret $small />
            </ToolStrip>
            <Workspace>
              <Icon name="gear" size={10} />
              <Select aria-label="工作空间"><option>草图与注释</option></Select>
              <Caret />
            </Workspace>
            <ToolStrip $width={48} $pad={3}>
              <IconButton aria-label="图纸集"><Icon name="docset" size={12} /></IconButton>
              <IconButton aria-label="图纸"><Icon name="sheetpen" size={12} /></IconButton>
              <Caret />
            </ToolStrip>
            <WindowTitle>
              <span>Autodesk AutoCAD 2018</span>
              <span>Drawing1.dwg</span>
            </WindowTitle>
            <ToolStrip $width={10} $pad={3}>
              <svg width="4" height="6" aria-hidden="true"><path d="M0 0l4 3-4 3z" fill="#f4f4f4" /></svg>
            </ToolStrip>
            <Search aria-label="搜索" placeholder="键入关键字或短语" />
            <ToolStrip $width={187}>
              <IconButton aria-label="查找"><Icon name="binoculars" size={13} /></IconButton>
              <IconButton><Icon name="user" />登录</IconButton>
              <ToolStrip as="span" $width={92} $justify="flex-end" $gap={5}>
                <Caret $small />
                <IconButton as="span"><Icon name="cart" size={13} /></IconButton>
                <IconButton as="span"><Icon name="a360" size={13} /></IconButton>
                <Caret $small />
              </ToolStrip>
              <IconButton aria-label="帮助"><Icon name="help" size={13} /><Caret $small /></IconButton>
            </ToolStrip>
            <WindowButtons>
              <WindowButton $width={22} aria-label="最小化"><Icon name="min" size={9} /></WindowButton>
              <WindowButton $width={19} aria-label="还原"><Icon name="restore" size={8} /></WindowButton>
              <WindowButton $width={34} $danger aria-label="关闭"><Icon name="close" size={9} /></WindowButton>
            </WindowButtons>
          </TitleBar>
          <MenuBar>
            {menus.map((m) => <a href="#menu" key={m}>{m}</a>)}
            <DocButtons>
              <IconButton aria-label="最小化图形"><Icon name="dmin" size={9} /></IconButton>
              <IconButton aria-label="还原图形"><Icon name="drestore" size={9} /></IconButton>
              <IconButton aria-label="关闭图形"><Icon name="dclose" size={8} /></IconButton>
            </DocButtons>
          </MenuBar>
        </HeaderRows>
      </Header>

      <RibbonTabs>
        {tabs.map((t, i) => <RibbonTab href="#tab" key={t} $active={i === 0}>{t}</RibbonTab>)}
        <ToolStrip $width={38} $justify="flex-end" $gap={4}>
          <Icon name="video" size={12} />
          <Caret $small />
        </ToolStrip>
      </RibbonTabs>

      <Ribbon>
        <Panel title="绘图">
          <LargeButton icon="line" label="直线" />
          <LargeButton icon="pline" label="多段线" $wide />
          <LargeButton icon="circle" label="圆" caret $single />
          <LargeButton icon="arc" label="圆弧" caret />
          <SmallGrid $columns="auto" $indent={1}>
            <SmallButton icon="rect" name="矩形" caret />
            <SmallButton icon="ellipse" name="椭圆" caret />
            <SmallButton icon="hatch" name="图案填充" caret />
          </SmallGrid>
        </Panel>
        <Panel title="修改">
          <SmallGrid $columns="43px 43px 56px 16px" $indent={2}>
            <SmallButton icon="move" label="移动" />
            <SmallButton icon="rotate" label="旋转" />
            <SmallButton icon="trim" label="修剪" caret />
            <SmallButton icon="erase" name="删除" />
            <SmallButton icon="copy" label="复制" />
            <SmallButton icon="mirror" label="镜像" />
            <SmallButton icon="fillet" label="圆角" caret />
            <SmallButton icon="explode" name="分解" />
            <SmallButton icon="stretch" label="拉伸" />
            <SmallButton icon="scale" label="缩放" />
            <SmallButton icon="array" label="阵列" caret />
            <SmallButton icon="offset" name="偏移" />
          </SmallGrid>
        </Panel>
        <Panel title="注释" inset>
          <LargeButton label="文字" caret />
          <LargeButton icon="dim" label="标注" />
          <SmallGrid $columns="auto">
            <SmallButton icon="linear" label="线性" caret />
            <SmallButton icon="leader" label="引线" caret />
            <SmallButton icon="table" label="表格" />
          </SmallGrid>
        </Panel>
        <Panel title="图层">
          <LargeButton icon="layerprops" label="图层特性" />
          <Column>
            <Combo>
              <Icon name="bulb" size={11} />
              <Icon name="sun" size={11} />
              <Icon name="lock" size={11} />
              <Swatch $size={9} />
              <Select aria-label="图层"><option>0</option></Select>
              <Caret />
            </Combo>
            <ToolRow>
              {["l1", "l2", "l3", "l4"].map((n) => <SmallButton key={n} icon={n} name={n} />)}
              <SmallButton icon="l5" label="置为当前" />
            </ToolRow>
            <ToolRow>
              {["l6", "l7", "l8", "l9"].map((n) => <SmallButton key={n} icon={n} name={n} />)}
              <SmallButton icon="l10" label="匹配图层" />
            </ToolRow>
          </Column>
        </Panel>
        <Panel title="块">
          <LargeButton icon="insert" label="插入" />
          <SmallGrid $columns="auto">
            <SmallButton icon="create" label="创建" />
            <SmallButton icon="editblock" label="编辑" />
            <SmallButton icon="attr" name="编辑属性" caret />
          </SmallGrid>
        </Panel>
        <Panel title="特性" launcher>
          <LargeButton icon="match" label="特性匹配" />
          <SmallGrid $columns="12px">
            <Icon name="wheel" size={12} />
            <Icon name="weights" size={11} />
            <Icon name="types" size={11} />
          </SmallGrid>
          <Column>
            <Combo>
              <Swatch $size={11} $gap={4} />
              <Select aria-label="对象颜色"><option>ByLayer</option></Select>
              <Caret />
            </Combo>
            <Combo>
              <Stroke />
              <Select aria-label="线宽"><option>ByLayer</option></Select>
              <Caret />
            </Combo>
            <Combo>
              <Stroke />
              <Select aria-label="线型"><option>ByLayer</option></Select>
              <Caret />
            </Combo>
          </Column>
        </Panel>
        <Panel title="组">
          <LargeButton icon="group" label="组" $single />
          <SmallGrid $columns="auto">
            <SmallButton icon="ungroup" name="解除编组" />
            <SmallButton icon="groupedit" name="组编辑" />
            <SmallButton icon="groupsel" name="组选择" active />
          </SmallGrid>
        </Panel>
        <Panel title="实用工具" inset>
          <LargeButton icon="measure" label="测量" caret />
          <SmallGrid $columns="auto">
            <SmallButton icon="pointid" name="点坐标" />
            <SmallButton icon="point" name="点样式" />
            <SmallButton icon="calc" name="计算器" />
          </SmallGrid>
        </Panel>
        <Panel title="剪贴板" menu={false} inset>
          <LargeButton icon="paste" label="粘贴" caret />
          <SmallGrid $columns="auto" $indent={2}>
            <SmallButton icon="cut" name="剪切" />
            <SmallButton icon="copyclip" name="复制剪裁" />
          </SmallGrid>
        </Panel>
      </Ribbon>

      <FileTabs>
        <FileTab $width={92}>开始</FileTab>
        <FileTab $width={95} $active>
          <span>Drawing1</span>
          <svg width="6" height="6" aria-hidden="true"><path d="M0 0l6 6M6 0L0 6" stroke="#484848" strokeWidth="1.400" /></svg>
        </FileTab>
        <AddTab aria-label="新图形"><Icon name="plus" size={7} /></AddTab>
      </FileTabs>

      <Workarea>
        <Canvas>
          <ViewLabel>[−][俯视][二维线框]</ViewLabel>
          <Crosshair viewBox="0 0 52 52" aria-hidden="true">
            <path d="M26 1v23M26 29v23M1 26h22M28 26h23M23.500 23.500h5v5h-5z" fill="none" stroke="#c9cdd3" shapeRendering="crispEdges" />
          </Crosshair>
          <Ucs viewBox="0 0 60 64" aria-hidden="true">
            <path d="M5.500 22v32M9 57.500h32M2.500 54.500h6v6h-6zM5.500 54v3.500H9" fill="none" stroke="#c9cdd3" />
            <text x="6" y="20">Y</text>
            <text x="44" y="58">X</text>
          </Ucs>
          <ViewCube>
            <span style={{ gridArea: "1 / 2" }}>北</span>
            <span style={{ gridArea: "2 / 1" }}>西</span>
            <CubeFace>上</CubeFace>
            <span style={{ gridArea: "2 / 3" }}>东</span>
            <span style={{ gridArea: "3 / 2" }}>南</span>
          </ViewCube>
          <Wcs>WCS</Wcs>
          <NavBar>
            <svg width="23" height="155" viewBox="0 0 23 155" fill="none" stroke="#3f4549" aria-hidden="true">
              <circle cx="19" cy="4" r="2" />
              <circle cx="12" cy="22" r="8" /><circle cx="12" cy="22" r="4" />
              <path d="M4 15h3M17 15h3M4 29h3M17 29h3M11 36h3" />
              <path d="M5 55l3 5h8l3-7-2-1-2 4V47l-2 6V45l-2 8V46l-1 8-2-6 0 8-3-2z" />
              <path d="M4 67l13 12M17 66L4 80M4 67h3M14 66h3" /><circle cx="16" cy="77" r="3" /><path d="M18 79l2 3M11 88h3" />
              <path d="M12 92v21M3 103h18M9 95l3-3 3 3M9 110l3 3 3-3M6 100l-3 3 3 3M18 100l3 3-3 3M9 99h6v7H9M11 116h3" />
              <path d="M3 124h17v4H3zM8 124v4M14 124v4M3 130h13v11H3z" /><path d="M8 133l4 3-4 3z" fill="#3c4246" />
              <circle cx="19" cy="150" r="2" />
            </svg>
          </NavBar>
          <CommandLine onSubmit={(e) => e.preventDefault()}>
            <CommandHandle>
              <IconButton type="button" aria-label="关闭命令行">
                <svg width="8" height="8" aria-hidden="true"><path d="M1 1l6 6M7 1L1 7" stroke="#e4e4e4" strokeWidth="1.500" /></svg>
              </IconButton>
              <IconButton type="button" aria-label="自定义"><Icon name="wrench" size={11} /></IconButton>
            </CommandHandle>
            <CommandField>
              <Icon name="prompt" size={11} />
              <Caret $small $color="#666" />
              <input aria-label="命令" placeholder="键入命令" />
            </CommandField>
          </CommandLine>
        </Canvas>
        <WindowEdge />
      </Workarea>

      <BottomBar>
        <LayoutTabs>
          <LayoutTab href="#model" $active>模型</LayoutTab>
          <LayoutTab href="#layout1">布局1</LayoutTab>
          <LayoutTab href="#layout2">布局2</LayoutTab>
          <AddTab $bottom aria-label="新建布局"><Icon name="plus" size={8} /></AddTab>
        </LayoutTabs>
        <StatusBar>
          <StatusButton $bold>模型</StatusButton>
          {status.map((s, i) => (
            <StatusButton key={i} $rule={s.rule} $tight={!s.icon} aria-label={s.text ? undefined : s.icon || "选项"}>
              {s.icon && <Icon name={s.icon} size={13} />}
              {s.caret && <Caret />}
              {s.text}
            </StatusButton>
          ))}
        </StatusBar>
        <Watermark aria-hidden="true">jingyan.baidu.com</Watermark>
        <Pointer viewBox="0 0 173 12" aria-hidden="true">
          <path d="M0 6h164" stroke="#d01818" strokeWidth="2" />
          <path d="M163 1l10 5-10 5z" fill="#ff1010" />
        </Pointer>
      </BottomBar>

      <Taskbar>
        <Task $color="#f8b800" />
        <Task $color="#f0e0e4" />
        <Task $color="#00d800" />
      </Taskbar>
    </Page>
  );
}
